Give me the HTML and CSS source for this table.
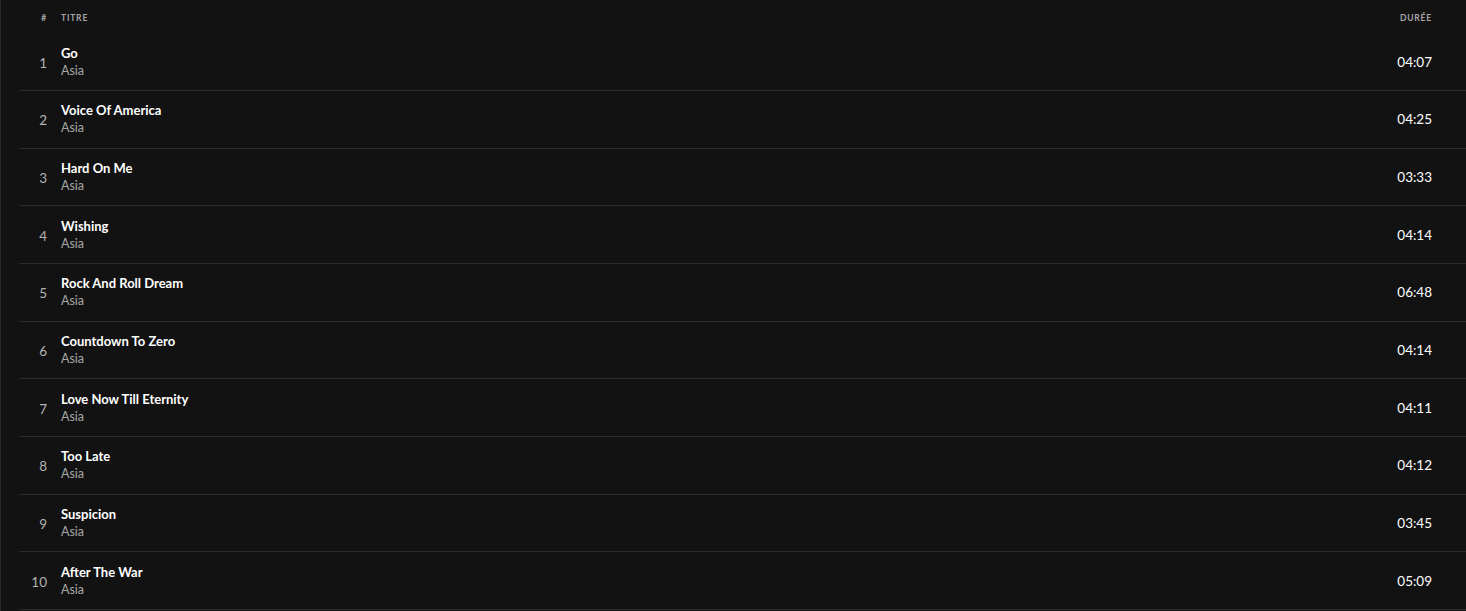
FILE: index.html
```html
<!DOCTYPE html>
<html lang="fr">
<head>
    <meta charset="UTF-8">
    <meta name="viewport" content="width=device-width, initial-scale=1.0">
    <title>Asia - Titres</title>
    <link rel="stylesheet" href="styles.css">
</head>
<body>
    <div class="tracklist">
        <div class="track-head">
            <span class="col-num">#</span>
            <span class="col-title">Titre</span>
            <span class="col-time">Durée</span>
        </div>
        <div class="track">
            <span class="col-num">1</span>
            <div class="col-title"><div class="name">Go</div><div class="artist">Asia</div></div>
            <span class="col-time">04:07</span>
        </div>
        <div class="track">
            <span class="col-num">2</span>
            <div class="col-title"><div class="name">Voice Of America</div><div class="artist">Asia</div></div>
            <span class="col-time">04:25</span>
        </div>
        <div class="track">
            <span class="col-num">3</span>
            <div class="col-title"><div class="name">Hard On Me</div><div class="artist">Asia</div></div>
            <span class="col-time">03:33</span>
        </div>
        <div class="track">
            <span class="col-num">4</span>
            <div class="col-title"><div class="name">Wishing</div><div class="artist">Asia</div></div>
            <span class="col-time">04:14</span>
        </div>
        <div class="track">
            <span class="col-num">5</span>
            <div class="col-title"><div class="name">Rock And Roll Dream</div><div class="artist">Asia</div></div>
            <span class="col-time">06:48</span>
        </div>
        <div class="track">
            <span class="col-num">6</span>
            <div class="col-title"><div class="name">Countdown To Zero</div><div class="artist">Asia</div></div>
            <span class="col-time">04:14</span>
        </div>
        <div class="track">
            <span class="col-num">7</span>
            <div class="col-title"><div class="name">Love Now Till Eternity</div><div class="artist">Asia</div></div>
            <span class="col-time">04:11</span>
        </div>
        <div class="track">
            <span class="col-num">8</span>
            <div class="col-title"><div class="name">Too Late</div><div class="artist">Asia</div></div>
            <span class="col-time">04:12</span>
        </div>
        <div class="track">
            <span class="col-num">9</span>
            <div class="col-title"><div class="name">Suspicion</div><div class="artist">Asia</div></div>
            <span class="col-time">03:45</span>
        </div>
        <div class="track">
            <span class="col-num">10</span>
            <div class="col-title"><div class="name">After The War</div><div class="artist">Asia</div></div>
            <span class="col-time">05:09</span>
        </div>
    </div>
</body>
</html>
```

FILE: styles.css
```css
body {
    margin: 0;
    background: #121212;
    font-family: "Lato", "Noto Sans", sans-serif;
    color: #fff;
}
.tracklist {
    border-left: 1px solid #2a2a2a;
    padding-left: 18px;
    min-height: 611px;
    box-sizing: border-box;
}
.track-head,
.track {
    display: flex;
    align-items: center;
    padding-right: 34px;
}
.track-head {
    height: 33.3px;
    padding-top: 3px;
    box-sizing: border-box;
    font-size: 8.5px;
    font-weight: bold;
    text-transform: uppercase;
    letter-spacing: 0.8px;
    color: #a7a7a7;
}
.track {
    height: 57.7px;
    border-bottom: 1px solid #2a2a2a;
    box-sizing: border-box;
}
.col-num {
    width: 42px;
    padding-right: 14px;
    box-sizing: border-box;
    text-align: right;
    flex-shrink: 0;
}
.track .col-num {
    font-size: 13.5px;
    color: #b3b3b3;
    padding-top: 2px;
}
.col-title {
    flex: 1;
}
.name {
    font-size: 13px;
    font-weight: bold;
    line-height: 18px;
    margin-top: -1px;
}
.artist {
    font-size: 12.5px;
    color: #a7a7a7;
    line-height: 17px;
}
.col-time {
    text-align: right;
}
.track .col-time {
    font-size: 13.5px;
}
```
